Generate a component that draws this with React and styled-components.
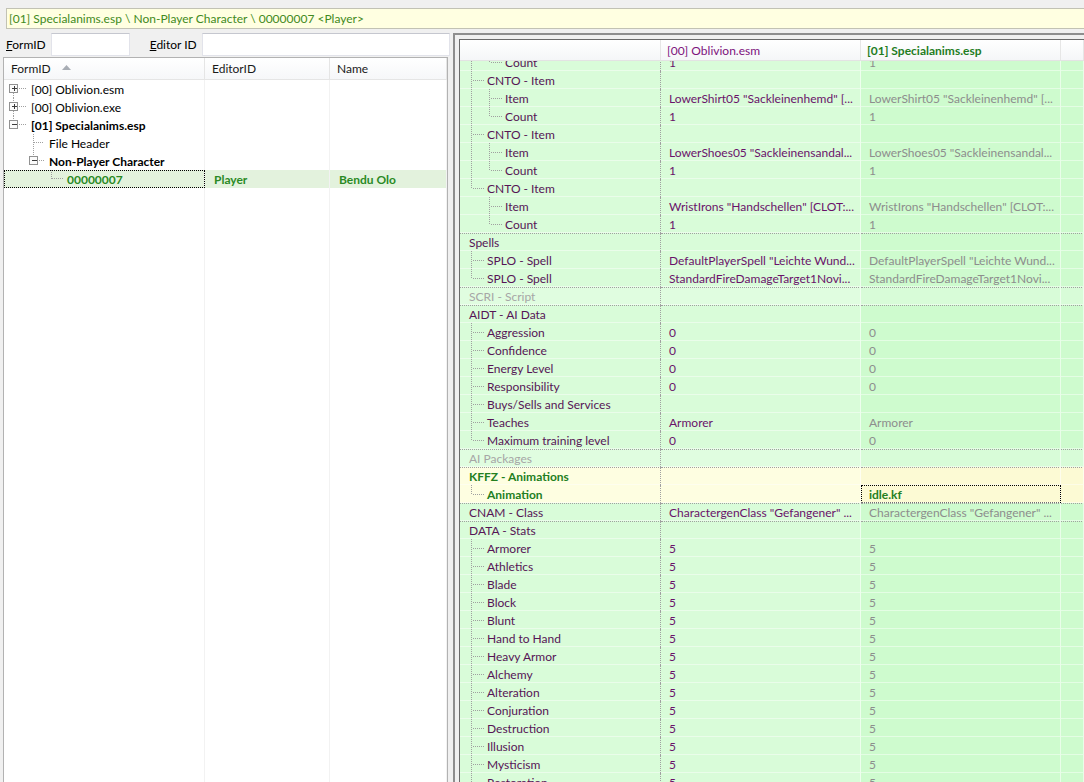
import React from 'react';
import styled, { createGlobalStyle } from 'styled-components';

// colours of the record view rows: [left two columns, right two columns]
const ROW_BG = {
  normal: ['#d9fcd9', '#cefbce'],
  gray: ['#e0fde0', '#d8fcd8'],
  mod: ['#fefee1', '#fcfad4'],
};

const LINE = '#a0a0a0';

const rightRows = [
  { label: 'Count', level: 2, last: true, anc: [true], v2: '1', v3: '1' },
  { label: 'CNTO - Item', level: 1, anc: [] },
  { label: 'Item', level: 2, anc: [true], v2: 'LowerShirt05 "Sackleinenhemd" [...', v3: 'LowerShirt05 "Sackleinenhemd" [...' },
  { label: 'Count', level: 2, last: true, anc: [true], v2: '1', v3: '1' },
  { label: 'CNTO - Item', level: 1, anc: [] },
  { label: 'Item', level: 2, anc: [true], v2: 'LowerShoes05 "Sackleinensandal...', v3: 'LowerShoes05 "Sackleinensandal...' },
  { label: 'Count', level: 2, last: true, anc: [true], v2: '1', v3: '1' },
  { label: 'CNTO - Item', level: 1, last: true, anc: [] },
  { label: 'Item', level: 2, anc: [false], v2: 'WristIrons "Handschellen" [CLOT:...', v3: 'WristIrons "Handschellen" [CLOT:...' },
  { label: 'Count', level: 2, last: true, anc: [false], v2: '1', v3: '1' },
  { label: 'Spells', level: 0, group: true },
  { label: 'SPLO - Spell', level: 1, v2: 'DefaultPlayerSpell "Leichte Wund...', v3: 'DefaultPlayerSpell "Leichte Wund...' },
  { label: 'SPLO - Spell', level: 1, last: true, v2: 'StandardFireDamageTarget1Novi...', v3: 'StandardFireDamageTarget1Novi...' },
  { label: 'SCRI - Script', level: 0, group: true, kind: 'gray' },
  { label: 'AIDT - AI Data', level: 0, group: true },
  { label: 'Aggression', level: 1, v2: '0', v3: '0' },
  { label: 'Confidence', level: 1, v2: '0', v3: '0' },
  { label: 'Energy Level', level: 1, v2: '0', v3: '0' },
  { label: 'Responsibility', level: 1, v2: '0', v3: '0' },
  { label: 'Buys/Sells and Services', level: 1 },
  { label: 'Teaches', level: 1, v2: 'Armorer', v3: 'Armorer' },
  { label: 'Maximum training level', level: 1, last: true, v2: '0', v3: '0' },
  { label: 'AI Packages', level: 0, group: true, kind: 'gray' },
  { label: 'KFFZ - Animations', level: 0, group: true, kind: 'mod' },
  { label: 'Animation', level: 1, last: true, kind: 'mod', v3: 'idle.kf', focus: true },
  { label: 'CNAM - Class', level: 0, group: true, v2: 'CharactergenClass "Gefangener" ...', v3: 'CharactergenClass "Gefangener" ...' },
  { label: 'DATA - Stats', level: 0, group: true },
  ...['Armorer', 'Athletics', 'Blade', 'Block', 'Blunt', 'Hand to Hand', 'Heavy Armor', 'Alchemy',
    'Alteration', 'Conjuration', 'Destruction', 'Illusion', 'Mysticism', 'Restoration'].map((s) => ({
    label: s, level: 1, v2: '5', v3: '5',
  })),
];

const GlobalStyle = createGlobalStyle`
  html, body { margin: 0; padding: 0; background: #f0f0f0; }
  body {
    font-family: Lato, "Open Sans", "Liberation Sans", sans-serif;
    font-size: 12px;
    color: #000;
  }
`;

const Window = styled.div`
  width: 1084px;
  height: 782px;
  overflow: hidden;
  display: flex;
  flex-direction: column;
`;

const PathBar = styled.div`
  margin: 8px 0 0 6px;
  height: 19px;
  line-height: 19px;
  padding-left: 2px;
  background: #ffffe1;
  border: 1px solid #c2c2b4;
  border-right: none;
  color: #3f8a22;
  white-space: nowrap;
`;

const Main = styled.div`
  display: flex;
  flex: 1;
  min-height: 0;
`;

const LeftPane = styled.div`
  width: 450px;
  flex: none;
  display: flex;
  flex-direction: column;
  padding-top: 4px;
`;

const FilterRow = styled.div`
  display: flex;
  align-items: center;
  height: 23px;
  padding-left: 6px;
`;

const FilterLabel = styled.label`
  margin-left: ${(p) => p.$gap || 0}px;
  margin-right: 5px;
  u { text-decoration: underline; }
`;

const FilterInput = styled.input`
  box-sizing: border-box;
  height: 23px;
  width: ${(p) => (p.$w ? `${p.$w}px` : 'auto')};
  flex: ${(p) => (p.$w ? 'none' : 1)};
  min-width: 0;
  border: 1px solid #e2e3ea;
  border-top-color: #c5c7cf;
  background: #fff;
  outline: none;
`;

const ListBox = styled.div`
  flex: 1;
  margin: 1px 2px 0 3px;
  border: 1px solid #b2b2b2;
  border-bottom: none;
  background: #fff;
  display: flex;
  flex-direction: column;
  min-height: 0;
`;

const ListHeader = styled.div`
  display: grid;
  grid-template-columns: 201px 125px 1fr;
  height: 21px;
  background: linear-gradient(#ffffff, #f6f7f9);
  border-bottom: 1px solid #e5e5e5;
`;

const HeadCell = styled.div`
  display: flex;
  align-items: center;
  padding-left: ${(p) => p.$pad || 7}px;
  border-right: 1px solid #e5e5e5;
  color: #1a1a1a;
  white-space: nowrap;
`;

const SortArrow = styled.svg`
  margin-left: 11px;
  margin-top: -3px;
`;

const TreeRow = styled.div`
  display: grid;
  grid-template-columns: 201px 125px 1fr;
  height: 18px;
  background: ${(p) => (p.$selected ? '#e3f2dd' : 'transparent')};
  color: ${(p) => (p.$selected ? '#2a8a24' : '#000')};
  font-weight: ${(p) => (p.$bold ? 700 : 400)};
`;

const TreeCell = styled.div`
  display: flex;
  align-items: center;
  padding-left: ${(p) => p.$pad || 0}px;
  border-right: 1px solid #f2f2f2;
  white-space: nowrap;
  overflow: hidden;
  outline: ${(p) => (p.$focus ? '1px dotted #000' : 'none')};
  outline-offset: -1px;
`;

const ListFiller = styled.div`
  flex: 1;
  display: grid;
  grid-template-columns: 201px 125px 1fr;
  div { border-right: 1px solid #f2f2f2; }
`;

const Splitter = styled.div`
  width: 3px;
  flex: none;
`;

const RightFrame = styled.div`
  flex: 1;
  min-width: 0;
  margin-top: 4px;
  border-top: 2px solid #8e8e8e;
  border-left: 2px solid #8e8e8e;
  padding: 4px 0 0 4px;
  display: flex;
  flex-direction: column;
`;

const RightInner = styled.div`
  flex: 1;
  min-height: 0;
  border-top: 1px solid #6b6b6b;
  border-left: 1px solid #6b6b6b;
  background: #fff;
  display: flex;
  flex-direction: column;
  overflow: hidden;
`;

const GridHeader = styled.div`
  position: relative;
  z-index: 1;
  display: grid;
  grid-template-columns: 201px 200px 200px 1fr;
  height: 20px;
  flex: none;
  background: linear-gradient(#ffffff, #f5f6f8);
  border-bottom: 1px solid #e3e3e3;
`;

const GridHeadCell = styled.div`
  display: flex;
  align-items: center;
  padding-left: 6px;
  border-right: 1px solid #e6e6e6;
  white-space: nowrap;
  color: ${(p) => p.$color || '#000'};
  font-weight: ${(p) => (p.$bold ? 700 : 400)};
`;

const GridBody = styled.div`
  margin-top: -8px;
  flex: 1;
  overflow: hidden;
`;

const GridRow = styled.div`
  display: grid;
  grid-template-columns: 201px 200px 200px 1fr;
  height: 18px;
  font-weight: ${(p) => (p.$kind === 'mod' ? 700 : 400)};
`;

const Cell = styled.div`
  position: relative;
  display: flex;
  align-items: center;
  min-width: 0;
  overflow: hidden;
  white-space: nowrap;
  padding-left: ${(p) => p.$pad}px;
  background: ${(p) => p.$bg};
  color: ${(p) => p.$color};
  border-right: ${(p) => (p.$sep === 'dotted' ? `1px dotted ${LINE}` : '1px solid rgba(255,255,255,0.55)')};
  outline: ${(p) => (p.$focus ? '1px dotted #000' : 'none')};
  outline-offset: -1px;
  &::before {
    content: '';
    display: ${(p) => (p.$top ? 'block' : 'none')};
    position: absolute;
    left: 0;
    right: -1px;
    top: 0;
    border-top: 1px dotted ${LINE};
  }
  &::after {
    content: '';
    position: absolute;
    left: 0;
    right: 0;
    bottom: 0;
    border-bottom: 1px solid rgba(255, 255, 255, 0.45);
  }
`;

const GuideSvg = styled.svg`
  flex: none;
  display: block;
`;

const Dot = (props) => (
  <line stroke={LINE} strokeDasharray="1 1" shapeRendering="crispEdges" {...props} />
);

// tree connector lines of the record view
function Guide({ level, last, anc = [] }) {
  if (!level) return null;
  const x = 2.5 + 18 * (level - 1);
  return (
    <GuideSvg width={level * 18} height={18}>
      {anc.map((on, i) => on && <Dot key={i} x1={2.5 + 18 * i} y1={0} x2={2.5 + 18 * i} y2={18} />)}
      <Dot x1={x} y1={0} x2={x} y2={last ? 10 : 18} />
      <Dot x1={x + 1} y1={9.5} x2={x + 12} y2={9.5} />
    </GuideSvg>
  );
}

function Expander({ x, open }) {
  const c = x + 4;
  return (
    <g>
      <rect x={x} y={4.5} width={8} height={8} fill="#fbfbfb" stroke="#919191" shapeRendering="crispEdges" />
      <line x1={c - 2} y1={8.5} x2={c + 3} y2={8.5} stroke="#3b3b3b" shapeRendering="crispEdges" />
      {!open && <line x1={c + 0.5} y1={6} x2={c + 0.5} y2={11} stroke="#3b3b3b" shapeRendering="crispEdges" />}
    </g>
  );
}

function FileNode({ label, open, first, last, bold }) {
  return (
    <TreeRow $bold={bold}>
      <TreeCell>
        <GuideSvg width={27} height={18}>
          {!first && <Dot x1={9.5} y1={0} x2={9.5} y2={4} />}
          {!last && <Dot x1={9.5} y1={13} x2={9.5} y2={18} />}
          <Expander x={5.5} open={open} />
          <Dot x1={15} y1={8.5} x2={22} y2={8.5} />
        </GuideSvg>
        {label}
      </TreeCell>
      <TreeCell />
      <TreeCell />
    </TreeRow>
  );
}

function LeftTree() {
  return (
    <ListBox>
      <ListHeader>
        <HeadCell>
          FormID
          <SortArrow width={9} height={5}>
            <polygon points="0,5 4.5,0 9,5" fill="#a8adb4" />
          </SortArrow>
        </HeadCell>
        <HeadCell>EditorID</HeadCell>
        <HeadCell>Name</HeadCell>
      </ListHeader>
      <FileNode label="[00] Oblivion.esm" first />
      <FileNode label="[00] Oblivion.exe" />
      <FileNode label="[01] Specialanims.esp" open last bold />
      <TreeRow>
        <TreeCell>
          <GuideSvg width={45} height={18}>
            <Dot x1={29.5} y1={0} x2={29.5} y2={18} />
            <Dot x1={30} y1={8.5} x2={40} y2={8.5} />
          </GuideSvg>
          File Header
        </TreeCell>
        <TreeCell />
        <TreeCell />
      </TreeRow>
      <TreeRow $bold>
        <TreeCell>
          <GuideSvg width={45} height={18}>
            <Dot x1={29.5} y1={0} x2={29.5} y2={4} />
            <Expander x={25.5} open />
            <Dot x1={35} y1={8.5} x2={41} y2={8.5} />
          </GuideSvg>
          Non-Player Character
        </TreeCell>
        <TreeCell />
        <TreeCell />
      </TreeRow>
      <TreeRow $bold $selected>
        <TreeCell $focus>
          <GuideSvg width={63} height={18}>
            <Dot x1={47.5} y1={0} x2={47.5} y2={9} />
            <Dot x1={48} y1={8.5} x2={59} y2={8.5} />
          </GuideSvg>
          00000007
        </TreeCell>
        <TreeCell $pad={9}>Player</TreeCell>
        <TreeCell $pad={9}>Bendu Olo</TreeCell>
      </TreeRow>
      <ListFiller>
        <div />
        <div />
        <div />
      </ListFiller>
    </ListBox>
  );
}

function RecordRow({ row }) {
  const kind = row.kind || 'normal';
  const [bgL, bgR] = ROW_BG[kind];
  const labelColor = kind === 'gray' ? '#a6a6a6' : kind === 'mod' ? '#237f1f' : '#561456';
  return (
    <GridRow $kind={kind}>
      <Cell $pad={9} $bg={bgL} $color={labelColor} $sep="dotted" $top={row.group}>
        <Guide level={row.level} last={row.last} anc={row.anc} />
        {row.label}
      </Cell>
      <Cell $pad={8} $bg={bgL} $color="#6a126a" $top={row.group}>
        {row.v2}
      </Cell>
      <Cell $pad={8} $bg={bgR} $color={kind === 'mod' ? '#237f1f' : '#8d8d8d'} $top={row.group} $focus={row.focus}>
        {row.v3}
      </Cell>
      <Cell $pad={0} $bg={bgR} $top={row.group} />
    </GridRow>
  );
}

export default function App() {
  return (
    <>
      <GlobalStyle />
      <Window>
        <PathBar>[01] Specialanims.esp \ Non-Player Character \ 00000007 &lt;Player&gt;</PathBar>
        <Main>
          <LeftPane>
            <FilterRow>
              <FilterLabel><u>F</u>ormID</FilterLabel>
              <FilterInput $w={79} />
              <FilterLabel $gap={20}><u>E</u>ditor ID</FilterLabel>
              <FilterInput />
            </FilterRow>
            <LeftTree />
          </LeftPane>
          <Splitter />
          <RightFrame>
            <RightInner>
              <GridHeader>
                <GridHeadCell />
                <GridHeadCell $color="#7d117d">[00] Oblivion.esm</GridHeadCell>
                <GridHeadCell $color="#1f7d1f" $bold>[01] Specialanims.esp</GridHeadCell>
                <GridHeadCell />
              </GridHeader>
              <GridBody>
                {rightRows.map((r, i) => (
                  <RecordRow key={i} row={r} />
                ))}
              </GridBody>
            </RightInner>
          </RightFrame>
        </Main>
      </Window>
    </>
  );
}
